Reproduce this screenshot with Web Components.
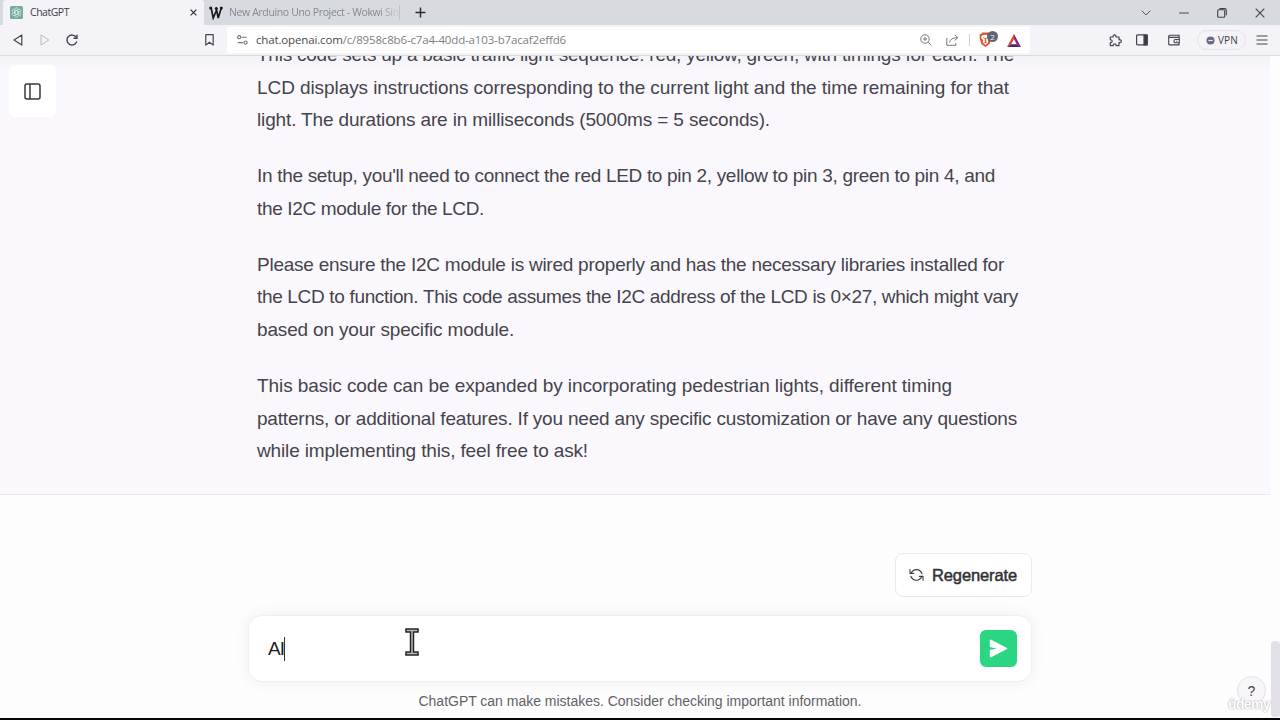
<!DOCTYPE html>
<html lang="en">
<head>
<meta charset="utf-8">
<title>ChatGPT</title>
<style>
    body {
        margin: 0;
        width: 1280px;
        height: 720px;
        overflow: hidden;
        background: #fefdfe;
    }
</style>
</head>
<body>
<browser-window>
    <browser-tabs slot="chrome"></browser-tabs>
    <browser-toolbar slot="chrome"></browser-toolbar>
    <chat-page>
        <chat-message>
            <chat-paragraph>
                <fit-line width="757">This code sets up a basic traffic light sequence: red, yellow, green, with timings for each. The</fit-line>
                <fit-line width="752">LCD displays instructions corresponding to the current light and the time remaining for that</fit-line>
                <fit-line width="513">light. The durations are in milliseconds (5000ms = 5 seconds).</fit-line>
            </chat-paragraph>
            <chat-paragraph>
                <fit-line width="738">In the setup, you'll need to connect the red LED to pin 2, yellow to pin 3, green to pin 4, and</fit-line>
                <fit-line width="227">the I2C module for the LCD.</fit-line>
            </chat-paragraph>
            <chat-paragraph>
                <fit-line width="747">Please ensure the I2C module is wired properly and has the necessary libraries installed for</fit-line>
                <fit-line width="761">the LCD to function. This code assumes the I2C address of the LCD is 0×27, which might vary</fit-line>
                <fit-line width="257">based on your specific module.</fit-line>
            </chat-paragraph>
            <chat-paragraph>
                <fit-line width="695">This basic code can be expanded by incorporating pedestrian lights, different timing</fit-line>
                <fit-line width="760">patterns, or additional features. If you need any specific customization or have any questions</fit-line>
                <fit-line width="331">while implementing this, feel free to ask!</fit-line>
            </chat-paragraph>
        </chat-message>
        <chat-composer slot="footer" draft="AI"></chat-composer>
    </chat-page>
</browser-window>

<script>
class BaseElement extends HTMLElement {
    constructor() {
        super();
        this.attachShadow({ mode: 'open' }).innerHTML = this.constructor.markup;
    }
}

// One line of text, tracked so that it fills the given width
class FitLine extends BaseElement {
    static markup = `
<style>
    :host { display: block; white-space: nowrap; }
    span { display: inline-block; }
</style>
<span><slot></slot></span>`;

    connectedCallback() {
        const span = this.shadowRoot.querySelector('span');
        const target = Number(this.getAttribute('width'));
        const spare = target - span.getBoundingClientRect().width;
        span.style.letterSpacing = (spare / this.textContent.length).toFixed(4) + 'px';
    }
}

class BrowserWindow extends BaseElement {
    static markup = `
<style>
    :host {
        display: flex;
        flex-direction: column;
        width: 1280px;
        height: 720px;
        box-sizing: border-box;
        border-bottom: 2px solid #050505;
        font-family: 'Liberation Sans', Arial, sans-serif;
    }
</style>
<slot name="chrome"></slot>
<slot></slot>`;
}

class BrowserTabs extends BaseElement {
    static markup = `
<style>
    :host {
        display: flex;
        height: 25px;
        background: #d7dbdf;
        font: 10.5px/25px 'Open Sans', 'Noto Sans', sans-serif;
        color: #3f4045;
    }
    .tab { display: flex; align-items: center; box-sizing: border-box; }
    .active {
        width: 201px;
        margin-left: 3px;
        padding: 0 7px 0 7px;
        background: #f4f3f7;
        border-radius: 3px 3px 0 0;
    }
    .active fit-line { margin-left: 7px; flex: 1; }
    .idle { width: 199px; padding-left: 5px; color: #85898e; }
    .title {
        width: 170px;
        margin-left: 6px;
        overflow: hidden;
        -webkit-mask-image: linear-gradient(to right, #000 150px, transparent 172px);
    }
    .rule { width: 1px; height: 15px; background: #bfc2c7; }
    svg { display: block; flex: none; }
    .plus { margin: 7px 0 0 12px; }
    .controls { display: flex; margin-left: auto; align-items: center; gap: 28px; padding-right: 15px; }
</style>
<div class="tab active">
    <svg width="13" height="13" viewBox="0 0 24 24">
        <rect width="24" height="24" rx="3" fill="#75ab9c"/>
        <g fill="none" stroke="#d9ece6" stroke-width="1.4">
            <path d="M8.600 10.300V6.800a3.700 3.700 0 0 1 6.600-2.100M8.600 10.300 12 8.300 16.700 11"/>
            <path d="M8.600 10.300V6.800a3.700 3.700 0 0 1 6.600-2.100M8.600 10.300 12 8.300 16.700 11" transform="rotate(60 12 12)"/>
            <path d="M8.600 10.300V6.800a3.700 3.700 0 0 1 6.600-2.100M8.600 10.300 12 8.300 16.700 11" transform="rotate(120 12 12)"/>
            <path d="M8.600 10.300V6.800a3.700 3.700 0 0 1 6.600-2.100M8.600 10.300 12 8.300 16.700 11" transform="rotate(180 12 12)"/>
            <path d="M8.600 10.300V6.800a3.700 3.700 0 0 1 6.600-2.100M8.600 10.300 12 8.300 16.700 11" transform="rotate(240 12 12)"/>
            <path d="M8.600 10.300V6.800a3.700 3.700 0 0 1 6.600-2.100M8.600 10.300 12 8.300 16.700 11" transform="rotate(300 12 12)"/>
        </g>
    </svg>
    <fit-line width="39">ChatGPT</fit-line>
    <svg width="7" height="7" viewBox="0 0 7 7" stroke="#38393d" stroke-width="1.3"><path d="M.6.6 6.4 6.4M6.4.6.6 6.4"/></svg>
</div>
<div class="tab idle">
    <svg width="14" height="14" viewBox="0 0 14 14" fill="none" stroke="#17181a" stroke-linecap="round">
        <path d="M2.200 2.200 4.200 12 7.600 4 9.200 12 12.200 2.200" stroke-width="1.700"/>
        <g fill="#17181a" stroke="none"><circle cx="1.700" cy="2.100" r="1.500"/><circle cx="7.300" cy="2.600" r="1.500"/><circle cx="12.300" cy="2" r="1.500"/></g>
    </svg>
    <div class="title"><fit-line width="173">New Arduino Uno Project - Wokwi Sim</fit-line></div>
    <div class="rule"></div>
</div>
<svg class="plus" width="11" height="11" viewBox="0 0 11 11" stroke="#2d2e32" stroke-width="1.5"><path d="M5.5.5v10M.5 5.5h10"/></svg>
<div class="controls">
    <svg width="10" height="6" viewBox="0 0 10 6" fill="none" stroke="#55585c" stroke-width="1"><path d="M.7.7 5 5 9.3.7"/></svg>
    <svg width="10" height="2" viewBox="0 0 10 2"><path d="M0 .5h10v1H0z" fill="#45474b"/></svg>
    <svg width="10" height="10" viewBox="0 0 10 10" fill="none" stroke="#414347" stroke-width="1.1"><rect x=".7" y="1.8" width="7" height="7.4" rx="1"/><path d="M2.4.6h5.3q1.600 0 1.600 1.600v5"/></svg>
    <svg width="10" height="10" viewBox="0 0 10 10" stroke="#414347" stroke-width="1.1"><path d="M.7.7 9.3 9.3M9.3.7.7 9.3"/></svg>
</div>`;
}

class BrowserToolbar extends BaseElement {
    static markup = `
<style>
    :host {
        display: flex;
        align-items: center;
        height: 31px;
        box-sizing: border-box;
        border-bottom: 1px solid #dddbe0;
        padding-right: 12px;
        background: #f4f3f7;
        font-family: 'Open Sans', 'Noto Sans', sans-serif;
    }
    svg { display: block; flex: none; fill: none; stroke: #44464c; }
    .nav { display: flex; align-items: center; width: 227px; box-sizing: border-box; padding-left: 13px; }
    .nav svg:nth-child(2) { margin-left: 17px; }
    .nav svg:nth-child(3) { margin-left: 16px; }
    .nav svg:nth-child(4) { margin-left: auto; margin-right: 13px; }
    .address {
        display: flex;
        align-items: center;
        width: 803px;
        height: 26px;
        margin-bottom: 1px;
        box-sizing: border-box;
        padding: 1px 9px 0 10px;
        background: #fff;
        border-radius: 3px;
        font-size: 11.5px;
        color: #7d7e83;
    }
    .address b { font-weight: 400; color: #494a50; }
    .address fit-line { margin-left: 8px; flex: 1; line-height: 24px; }
    .address svg { stroke: #74777c; }
    .rule { width: 1px; height: 12px; margin: 0 9px 0 10px; background: #cfcfd3; }
    .shield { position: relative; margin-right: 8px; width: 20px; height: 16px; }
    .shield span {
        position: absolute;
        left: 8px;
        top: -1px;
        width: 11px;
        height: 11px;
        border-radius: 6px;
        background: #5e6472;
        color: #eef;
        font: 8px/11px 'Open Sans', sans-serif;
        text-align: center;
    }
    .tools { display: flex; align-items: center; margin-left: auto; }
    .vpn {
        display: flex;
        align-items: center;
        gap: 3px;
        width: 49px;
        height: 20px;
        box-sizing: border-box;
        margin: 0 10px 0 17px;
        padding-left: 8px;
        border: 1px solid #e6e4ea;
        border-radius: 10px;
        font-size: 10px;
        color: #3e3f45;
    }
</style>
<div class="nav">
    <svg width="10" height="12" viewBox="0 0 10 12" stroke-width="1.2" stroke-linejoin="round"><path d="M8.8.9v10.2L1 6z"/></svg>
    <svg width="10" height="12" viewBox="0 0 10 12" stroke-width="1" stroke-linejoin="round" style="stroke:#bbbac0"><path d="M1 .9v10.2L8.8 6z"/></svg>
    <svg width="12" height="12" viewBox="0 0 12 12" stroke-width="1.4"><path d="M10.3 3.5A5 5 0 1 0 10.8 7.4"/><path d="M11 .7v3.5H7.5"/></svg>
    <svg width="9" height="12" viewBox="0 0 9 12" stroke-width="1.2" stroke-linejoin="round"><path d="M.8.7h7.4v10.4L4.5 8.2.8 11.1z"/></svg>
</div>
<div class="address">
    <svg width="11" height="10" viewBox="0 0 11 10" stroke-width="1.1"><circle cx="2.2" cy="2.2" r="1.6"/><path d="M4.4 2.2H9.8M.7 7.6H6"/><circle cx="8.6" cy="7.6" r="1.6"/></svg>
    <fit-line width="310"><b>chat.openai.com</b>/c/8958c8b6-c7a4-40dd-a103-b7acaf2effd6</fit-line>
    <svg width="12" height="12" viewBox="0 0 12 12"><circle cx="5" cy="5" r="4.2"/><path d="M8.2 8.2 11.4 11.4M5 3v4M3 5h4"/></svg>
    <svg width="13" height="12" viewBox="0 0 13 12" style="margin-left:14px"><path d="M.8 4v7.3h9V9.2M3.6 8.6Q4 3.8 11.6 3.6M8.7.8 11.9 3.6 8.7 6.4"/></svg>
    <div class="rule"></div>
    <div class="shield">
        <svg width="13" height="15" viewBox="0 0 13 15" style="stroke:none">
            <path fill="#df5527" d="M3.5.5h6L11 2l1.5.6-.5 2 .4 1.5-1.8 6L6.5 15 2.3 12.1.5 6.1.9 4.6l-.5-2L2 2z"/>
            <path fill="#fff" d="M3 3.2 6.5 2.8 10 3.2 11 5.6 8.8 8.4 9.4 10.2 6.5 13 3.6 10.2 4.2 8.4 2 5.6z"/>
            <path fill="#df5527" d="M3.4 5.2 5.8 5.8 5.4 7zM9.6 5.2 7.2 5.8 7.6 7zM6 6h1l.3 3-.8.5-.8-.5zM4.8 10.3l1.7-.8 1.7.8-1.7 1z"/>
        </svg>
        <span>2</span>
    </div>
    <svg width="14" height="13" viewBox="0 0 14 13" style="stroke:none">
        <path fill="#e0472f" d="M7 0 0 13 4.300 10.200 7 5z"/>
        <path fill="#8a2379" d="M7 0 14 13 9.700 10.200 7 5z"/>
        <path fill="#532082" d="M0 13h14L9.700 10.200H4.300z"/>
    </svg>
</div>
<div class="tools">
    <svg width="13" height="13" viewBox="0 0 13 13" stroke-width="1.2" stroke-linejoin="round"><path d="M1.3 3h2.9C3.5.2 7.6.2 6.9 3H10v2.8c3.1-.7 3.1 3.4 0 2.7v3.2H7.1c.6-2.5-3.4-2.5-2.8 0h-3V8.6c2.5.5 2.5-3.3 0-2.8z"/></svg>
    <svg width="12" height="12" viewBox="0 0 12 12" stroke-width="1.2" style="margin-left:14px"><rect x=".6" y=".9" width="10.8" height="10" rx="1"/><path d="M8 1h3v10H8z" fill="#393a40"/></svg>
    <svg width="12" height="12" viewBox="0 0 12 12" stroke-width="1.1" style="margin-left:20px"><path d="M11 3.3V1.2H1.7Q.7 1.2.7 2.2v7.7q0 1 1 1H11V8.8M.8 3.4h10.5v5.4H7.4q-1.4 0-1.4-1.3V6.8q0-1.3 1.4-1.3h3.9M8.2 7.2h1"/></svg>
    <div class="vpn">
        <svg width="9" height="9" viewBox="0 0 9 9"><circle cx="4.5" cy="4.5" r="4" fill="#6d6689" stroke="none"/><path d="M2.3 4.5h4.4" stroke="#e8e5f0" stroke-width="1.2"/></svg>
        <fit-line width="20">VPN</fit-line>
    </div>
    <svg width="12" height="10" viewBox="0 0 12 10" stroke-width="1.1"><path d="M.5 1h11M.5 5h11M.5 9h11"/></svg>
</div>`;
}

class ChatPage extends BaseElement {
    static markup = `
<style>
    :host {
        display: grid;
        grid-template-columns: 1fr 10px;
        flex: 1;
        min-height: 0;
        position: relative;
        background: #fefdfe;
    }
    main { display: flex; flex-direction: column; min-height: 0; overflow: hidden; }
    .thread {
        display: flex;
        flex: none;
        flex-direction: column;
        justify-content: flex-end;
        height: 439px;
        box-sizing: border-box;
        overflow: hidden;
        border-bottom: 1px solid #e9e7ec;
        background: linear-gradient(#f4f2f6, #faf8fc 14px);
    }
    .bar { display: flex; flex-direction: column; justify-content: flex-end; }
    .thumb { height: 76px; margin: 0 0 1px 1px; background: #e3dfe9; border-radius: 4px 4px 3px 3px; }
    /* floating controls */
    .sidebar, .help { position: absolute; display: flex; align-items: center; justify-content: center; box-sizing: border-box; }
    .sidebar { left: 9px; top: 9px; width: 47px; height: 52px; border-radius: 6px; background: #fff; }
    .help {
        left: 1237px;
        top: 620px;
        width: 29px;
        height: 29px;
        border: 1px solid #e2e0e5;
        border-radius: 50%;
        background: #f8f6fa;
        color: #424247;
        font-size: 14px;
    }
    .mark {
        position: absolute;
        left: 1228px;
        top: 640px;
        font: bold 14px/17px 'Liberation Sans', sans-serif;
        color: #fff;
        text-shadow: 0 0 1px #aaa8ad, 0 0 2px #bbb9be;
    }
</style>
<main>
    <div class="thread"><slot></slot></div>
    <slot name="footer"></slot>
</main>
<div class="bar"><div class="thumb"></div></div>
<div class="sidebar">
    <svg width="17" height="17" viewBox="0 0 17 17" fill="none" stroke="#38383d" stroke-width="1.5"><rect x="1" y="1" width="15" height="15" rx="2"/><path d="M6 1v15"/></svg>
</div>
<div class="help">?</div>
<div class="mark"><fit-line width="42">ûdemy</fit-line></div>`;
}

class ChatMessage extends BaseElement {
    static markup = `
<style>
    :host {
        display: flex;
        flex-direction: column;
        gap: 23.3px;
        padding: 0 0 26.2px 257px;
        font-size: 19px;
        line-height: 32.64px;
        color: #45444c;
    }
</style>
<slot></slot>`;
}

class ChatParagraph extends BaseElement {
    static markup = `
<style>:host { display: block; }</style>
<slot></slot>`;
}

class ChatComposer extends BaseElement {
    static markup = `
<style>
    :host {
        display: flex;
        flex-direction: column;
        width: 784px;
        margin: 58px 0 0 248px;
    }
    .regenerate {
        display: flex;
        align-items: center;
        align-self: flex-end;
        width: 137px;
        height: 44px;
        box-sizing: border-box;
        padding-left: 13px;
        gap: 8px;
        border: 1px solid #ebe9ed;
        border-radius: 8px;
        background: #fff;
        color: #313136;
        font-size: 16.5px;
        -webkit-text-stroke: 0.5px #313136;
    }
    .field {
        position: relative;
        display: flex;
        align-items: center;
        height: 67px;
        box-sizing: border-box;
        margin-top: 18px;
        padding: 0 14px 0 19px;
        border: 1px solid #f0eef2;
        border-radius: 14px;
        background: #fff;
        box-shadow: 0 0 14px rgba(60, 40, 80, .08);
        font-size: 19px;
        color: #1c1c20;
    }
    .caret { width: 1px; height: 24px; background: #333; }
    .send {
        display: flex;
        align-items: center;
        justify-content: center;
        width: 37px;
        height: 37px;
        margin-left: auto;
        border-radius: 6px;
        background: #2bd683;
    }
    .cursor { position: absolute; left: 156px; top: 12px; }
    .note { align-self: center; margin-top: 8px; font-size: 14px; line-height: 22px; color: #626168; }
</style>
<div class="regenerate">
    <svg width="15" height="14" viewBox="0 0 15 14" fill="none" stroke="#3a3a40" stroke-width="1.1" stroke-linecap="round" stroke-linejoin="round">
        <path d="M1 1.6v3.8h3.6M14 12.2V8.4h-3.6"/>
        <path d="M2.1 5.2C4.5.4 10.9.3 13 5.7M12.9 8.6C10.5 13.4 4.1 13.7 1.9 8.2"/>
    </svg>
    <fit-line width="85">Regenerate</fit-line>
</div>
<div class="field">
    <fit-line class="draft" width="16"></fit-line>
    <span class="caret"></span>
    <div class="send">
        <svg width="19" height="19" viewBox="0 0 19 19"><path fill="#fff" d="M.8 1.5q0-1.4 1.4-.8L18 9q.8.5 0 1L2.2 18.3Q.8 18.9.8 17.5V11l6.7-1.5L.8 8z"/></svg>
    </div>
    <svg class="cursor" width="14" height="28" viewBox="0 0 14 28">
        <path d="M1 1h12v3H8.500v20H13v3H1v-3h4.500V4H1z" fill="#bbb" stroke="#252528" stroke-width="1.5"/>
    </svg>
</div>
<div class="note"><fit-line width="443">ChatGPT can make mistakes. Consider checking important information.</fit-line></div>`;

    constructor() {
        super();
        this.shadowRoot.querySelector('.draft').textContent = this.getAttribute('draft');
    }
}

customElements.define('browser-window', BrowserWindow);
customElements.define('browser-tabs', BrowserTabs);
customElements.define('browser-toolbar', BrowserToolbar);
customElements.define('chat-page', ChatPage);
customElements.define('chat-message', ChatMessage);
customElements.define('chat-paragraph', ChatParagraph);
customElements.define('chat-composer', ChatComposer);
// last, since it measures text in the fonts the others set
customElements.define('fit-line', FitLine);
</script>
</body>
</html>
